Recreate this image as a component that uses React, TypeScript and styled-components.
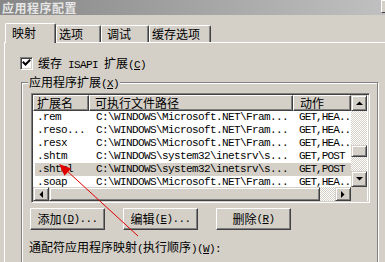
import React from 'react';
import styled, { createGlobalStyle } from 'styled-components';

const CJK = `"Noto Sans CJK SC", "Noto Sans", sans-serif`;
const MONO = `"Liberation Mono", "DejaVu Sans Mono", monospace`;

const GlobalStyle = createGlobalStyle`
  html, body { margin: 0; padding: 0; background: #d4d0c8; overflow: hidden; }
  body { font-family: ${CJK}; font-size: 12px; color: #000; }
`;

const Window = styled.div`
  position: relative;
  width: 400px;
  height: 262px;
  overflow: hidden;
  background: #d4d0c8;
`;

const TitleBar = styled.div`
  height: 15px;
  display: flex;
  align-items: flex-start;
  justify-content: space-between;
  padding: 0 3px 0 2px;
  background: linear-gradient(to right, #878787, #c0c0c0 96%);
`;

const TitleText = styled.span`
  font-family: ${CJK};
  font-weight: bold;
  font-size: 12px;
  line-height: 15px;
  height: 15px;
  letter-spacing: 0.5px;
  color: #e6e6e6;
  white-space: nowrap;
`;

const TitleButton = styled.span`
  box-sizing: border-box;
  width: 16px;
  height: 13px;
  background: #d4d0c8;
  border-top: 1px solid #fff;
  border-left: 1px solid #fff;
  border-right: 1px solid #404040;
  border-bottom: 1px solid #404040;
`;

const Content = styled.div`
  padding: 8px 0 0 4px;
`;

const TabRow = styled.div`
  display: flex;
  align-items: flex-end;
  height: 19px;
  padding-left: 1px;
  position: relative;
  z-index: 1;
`;

const Tab = styled.div<{ $active?: boolean; $w: number; $pad: number }>`
  box-sizing: border-box;
  width: ${p => p.$w}px;
  height: ${p => (p.$active ? 20 : 17)}px;
  margin-bottom: ${p => (p.$active ? -1 : 0)}px;
  background: #d4d0c8;
  border-top: 1px solid #fff;
  border-left: 1px solid #fff;
  border-right: 1px solid #404040;
  border-top-left-radius: 2px;
  border-top-right-radius: 2px;
  box-shadow: inset -1px 0 0 #808080;
  padding: ${p => (p.$active ? 2 : 1)}px 0 0 ${p => p.$pad}px;
  font-family: ${CJK};
  font-size: 12px;
  line-height: 13px;
  white-space: nowrap;
`;

const Panel = styled.div`
  box-sizing: border-box;
  width: 392px;
  height: 230px;
  border-top: 1px solid #fff;
  border-left: 1px solid #fff;
  border-right: 1px solid #404040;
  padding: 14px 0 0 15px;
`;

const CheckRow = styled.div`
  display: flex;
  align-items: center;
  gap: 5px;
  height: 13px;
`;

const CheckBox = styled.span`
  box-sizing: border-box;
  width: 13px;
  height: 13px;
  padding: 1px;
  background: #fff;
  border-top: 1px solid #808080;
  border-left: 1px solid #808080;
  border-right: 1px solid #fff;
  border-bottom: 1px solid #fff;
  box-shadow: inset 1px 1px 0 #404040, inset -1px -1px 0 #d4d0c8;
  display: flex;
`;

const Label = styled.span`
  font-family: ${CJK};
  font-size: 12px;
  line-height: 13px;
  white-space: nowrap;
`;

const Latin = styled.span`
  font-family: ${MONO};
  font-size: 11px;
  letter-spacing: -0.6px;
`;

const Key = styled.span`
  text-decoration: underline;
`;

const GroupBox = styled.div`
  position: relative;
  box-sizing: border-box;
  width: 357px;
  height: 240px;
  margin: 12px 0 0 1px;
  padding: 10px 0 0 9px;
  border: 1px solid #808080;
  box-shadow: inset 1px 1px 0 #fff, 1px 1px 0 #fff;
`;

const GroupLabel = styled.span`
  position: absolute;
  top: -7px;
  left: 6px;
  padding: 0 1px;
  background: #d4d0c8;
  font-family: ${CJK};
  font-size: 12px;
  line-height: 12px;
  white-space: nowrap;
`;

const ListBox = styled.div`
  box-sizing: border-box;
  width: 339px;
  height: 110px;
  padding: 1px;
  background: #fff;
  border-top: 1px solid #808080;
  border-left: 1px solid #808080;
  border-right: 1px solid #fff;
  border-bottom: 1px solid #fff;
  box-shadow: inset 1px 1px 0 #404040, inset -1px -1px 0 #d4d0c8;
`;

const ListGrid = styled.div`
  display: grid;
  grid-template-columns: 318px 16px;
  grid-template-rows: 16px 76px 14px;
  width: 335px;
  height: 106px;
`;

const Header = styled.div`
  display: flex;
  grid-column: 1;
  grid-row: 1;
`;

const HeaderCell = styled.div<{ $w: number; $pad: number }>`
  box-sizing: border-box;
  flex: none;
  width: ${p => p.$w}px;
  height: 16px;
  padding-left: ${p => p.$pad}px;
  background: #d4d0c8;
  border-top: 1px solid #fff;
  border-left: 1px solid #fff;
  border-right: 1px solid #404040;
  border-bottom: 1px solid #404040;
  box-shadow: inset -1px -1px 0 #808080;
  font-family: ${CJK};
  font-size: 12px;
  line-height: 14px;
  white-space: nowrap;
  overflow: hidden;
`;

const Rows = styled.div`
  grid-column: 1;
  grid-row: 2;
  overflow: hidden;
`;

const Row = styled.div<{ $selected?: boolean }>`
  display: flex;
  height: 13px;
  margin-left: 2px;
  background: ${p => (p.$selected ? '#d4d0c8' : 'transparent')};
`;

const Cell = styled.div<{ $w: number; $pad: number; $ls: number }>`
  box-sizing: border-box;
  flex: none;
  width: ${p => p.$w}px;
  padding-left: ${p => p.$pad}px;
  font-family: ${MONO};
  font-size: 11px;
  letter-spacing: ${p => p.$ls}px;
  line-height: 13px;
  white-space: nowrap;
  overflow: hidden;
`;

const VScroll = styled.div`
  grid-column: 2;
  grid-row: 1 / span 2;
  display: flex;
  flex-direction: column;
`;

const HScroll = styled.div`
  grid-column: 1;
  grid-row: 3;
  display: flex;
`;

const Corner = styled.div`
  grid-column: 2;
  grid-row: 3;
  background: #d4d0c8;
`;

const Raised = styled.div<{ $w?: number; $h?: number }>`
  box-sizing: border-box;
  ${p => (p.$w ? `width: ${p.$w}px;` : '')}
  ${p => (p.$h ? `height: ${p.$h}px;` : '')}
  flex: none;
  background: #d4d0c8;
  border-top: 1px solid #d4d0c8;
  border-left: 1px solid #d4d0c8;
  border-right: 1px solid #404040;
  border-bottom: 1px solid #404040;
  box-shadow: inset 1px 1px 0 #fff, inset -1px -1px 0 #808080;
  display: flex;
  align-items: center;
  justify-content: center;
`;

const Track = styled.div<{ $size: number; $vertical?: boolean }>`
  flex: none;
  ${p => (p.$vertical ? `height: ${p.$size}px;` : `width: ${p.$size}px;`)}
  background-color: #fff;
  background-image: conic-gradient(#d4d0c8 25%, #fff 0 50%, #d4d0c8 0 75%, #fff 0);
  background-size: 2px 2px;
`;

const ButtonRow = styled.div`
  display: flex;
  gap: 18px;
  margin: 5px 0 0 -1px;
`;

const PushButton = styled.div`
  box-sizing: border-box;
  width: 75px;
  height: 22px;
  background: #d4d0c8;
  border-top: 1px solid #fff;
  border-left: 1px solid #fff;
  border-right: 1px solid #404040;
  border-bottom: 1px solid #404040;
  box-shadow: inset -1px -1px 0 #808080;
  display: flex;
  align-items: center;
  justify-content: center;
  font-family: ${CJK};
  font-size: 12px;
  line-height: 14px;
  white-space: nowrap;
`;

const WildcardLabel = styled.div`
  margin: 11px 0 0 -2px;
  font-family: ${CJK};
  font-size: 12px;
  line-height: 12px;
  white-space: nowrap;
`;

const Overlay = styled.svg`
  position: absolute;
  left: 0;
  top: 0;
  pointer-events: none;
`;

const Arrow = ({ dir }: { dir: 'up' | 'down' | 'left' | 'right' }) => {
  const pts = {
    up: '0,4 7,4 3.5,0.5',
    down: '0,0 7,0 3.5,3.5',
    left: '4,0 4,7 0.5,3.5',
    right: '0,0 0,7 3.5,3.5',
  }[dir];
  const vertical = dir === 'up' || dir === 'down';
  return (
    <svg width={vertical ? 7 : 4} height={vertical ? 4 : 7} viewBox={vertical ? '0 0 7 4' : '0 0 4 7'}>
      <polygon points={pts} fill="#000" />
    </svg>
  );
};

const COLS = [
  { w: 54, pad: 2, ls: -0.6 },
  { w: 204, pad: 7, ls: -0.6 },
  { w: 58, pad: 6, ls: -0.9 },
];

const rows = [
  ['.rem', 'C:\\WINDOWS\\Microsoft.NET\\Fram...', 'GET,HEA..'],
  ['.reso...', 'C:\\WINDOWS\\Microsoft.NET\\Fram...', 'GET,HEA..'],
  ['.resx', 'C:\\WINDOWS\\Microsoft.NET\\Fram...', 'GET,HEA..'],
  ['.shtm', 'C:\\WINDOWS\\system32\\inetsrv\\s...', 'GET,POST'],
  ['.shtml', 'C:\\WINDOWS\\system32\\inetsrv\\s...', 'GET,POST'],
  ['.soap', 'C:\\WINDOWS\\Microsoft.NET\\Fram...', 'GET,HEA..'],
];

export default function App() {
  return (
    <>
      <GlobalStyle />
      <Window>
        <TitleBar>
          <TitleText>应用程序配置</TitleText>
          <TitleButton />
        </TitleBar>
        <Content>
          <TabRow>
            <Tab $active $w={51} $pad={6}>映射</Tab>
            <Tab $w={45} $pad={2}>选项</Tab>
            <Tab $w={48} $pad={5}>调试</Tab>
            <Tab $w={62} $pad={2}>缓存选项</Tab>
          </TabRow>
          <Panel>
            <CheckRow>
              <CheckBox>
                <svg width="9" height="9" viewBox="0 0 9 9">
                  <path d="M1.5 3.5 L3.5 5.5 L7.5 1.5" stroke="#000" strokeWidth="2" fill="none" strokeLinecap="square" />
                </svg>
              </CheckBox>
              <Label>
                缓存<Latin> ISAPI </Latin>扩展<Latin>(<Key>C</Key>)</Latin>
              </Label>
            </CheckRow>
            <GroupBox>
              <GroupLabel>
                应用程序扩展<Latin>(<Key>X</Key>)</Latin>
              </GroupLabel>
              <ListBox>
                <ListGrid>
                  <Header>
                    <HeaderCell $w={56} $pad={3}>扩展名</HeaderCell>
                    <HeaderCell $w={204} $pad={5}>可执行文件路径</HeaderCell>
                    <HeaderCell $w={58} $pad={6}>动作</HeaderCell>
                  </Header>
                  <Rows>
                    {rows.map((r, i) => (
                      <Row key={i} $selected={i === 4}>
                        {r.map((t, j) => (
                          <Cell key={j} $w={COLS[j].w} $pad={COLS[j].pad} $ls={COLS[j].ls}>{t}</Cell>
                        ))}
                      </Row>
                    ))}
                  </Rows>
                  <VScroll>
                    <Raised $h={16}><Arrow dir="up" /></Raised>
                    <Track $vertical $size={34} />
                    <Raised $h={12} />
                    <Track $vertical $size={14} />
                    <Raised $h={16}><Arrow dir="down" /></Raised>
                  </VScroll>
                  <HScroll>
                    <Raised $w={16}><Arrow dir="left" /></Raised>
                    <Raised $w={271} />
                    <Track $size={15} />
                    <Raised $w={16}><Arrow dir="right" /></Raised>
                  </HScroll>
                  <Corner />
                </ListGrid>
              </ListBox>
              <ButtonRow>
                <PushButton>添加<Latin>(<Key>D</Key>)...</Latin></PushButton>
                <PushButton>编辑<Latin>(<Key>E</Key>)...</Latin></PushButton>
                <PushButton>删除<Latin>(<Key>R</Key>)</Latin></PushButton>
              </ButtonRow>
              <WildcardLabel>
                通配符应用程序映射<Latin>(</Latin>执行顺序<Latin>)(<Key>W</Key>):</Latin>
              </WildcardLabel>
            </GroupBox>
          </Panel>
        </Content>
        <Overlay width="385" height="262" viewBox="0 0 385 262">
          <line x1="66" y1="170" x2="138" y2="236" stroke="#e00000" strokeWidth="1" />
          <polygon points="59,164 71.3,168.4 64.5,175.8" fill="#e00000" />
        </Overlay>
      </Window>
    </>
  );
}
